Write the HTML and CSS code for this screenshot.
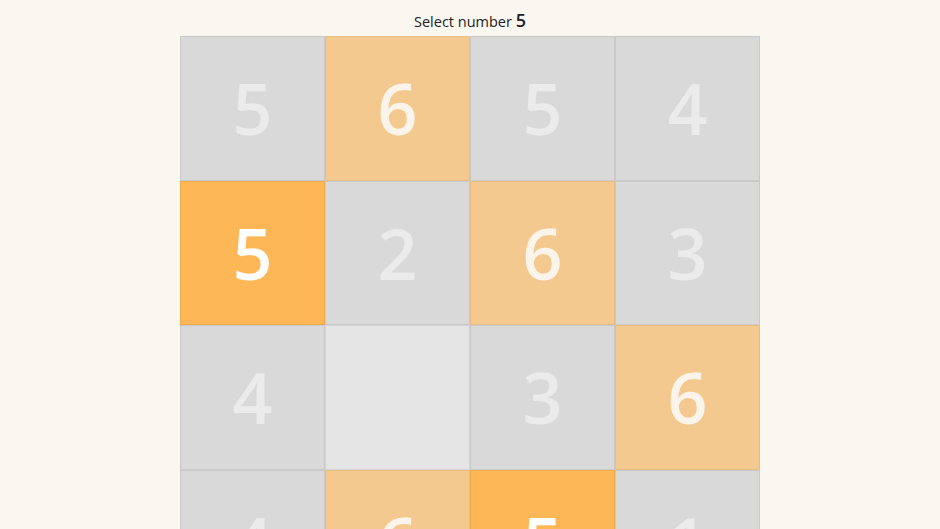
FILE: index.html
```html
<!DOCTYPE html>
<html lang="en">
<head>
    <meta charset="UTF-8">
    <meta name="viewport" content="width=device-width, initial-scale=1.0">
    <title>Select Number</title>
    <link rel="stylesheet" href="styles.css">
</head>
<body>
    <div class="prompt">Select number <span class="target">5</span></div>

    <!-- Board -->
    <div class="board">
        <div class="cell">5</div>
        <div class="cell near">6</div>
        <div class="cell">5</div>
        <div class="cell">4</div>

        <div class="cell hit">5</div>
        <div class="cell">2</div>
        <div class="cell near">6</div>
        <div class="cell">3</div>

        <div class="cell">4</div>
        <div class="cell empty"></div>
        <div class="cell">3</div>
        <div class="cell near">6</div>

        <div class="cell">4</div>
        <div class="cell near">6</div>
        <div class="cell hit">5</div>
        <div class="cell">1</div>
    </div>
</body>
</html>
```

FILE: styles.css
```css
/* Basic Styling */
body {
    margin: 0;
    font-family: "Open Sans", Arial, sans-serif;
    background-color: #faf7f0;
    color: #222;
}

.prompt {
    height: 36px;
    line-height: 40px;
    text-align: center;
    font-size: 14.5px;
}

.target {
    font-size: 18px;
    font-weight: 600;
}

/* Board */
.board {
    display: grid;
    grid-template-columns: repeat(4, 1fr);
    grid-auto-rows: 144.5px;
    width: 580px;
    margin: 0 auto;
}

.cell {
    box-sizing: border-box;
    display: flex;
    align-items: center;
    justify-content: center;
    font-size: 70px;
    font-weight: 600;
    color: #ebebeb;
    background-color: #d9d9d9;
    border: 1px solid #c9c9c9;
}

.cell.near {
    background-color: #f4c98f;
    border-color: #e8bd82;
    color: #fbf4ea;
}

.cell.hit {
    background-color: #feb756;
    border-color: #eeab4c;
    color: #fff;
}

.cell.empty {
    background-color: #e5e5e5;
    border-color: #d3d3d3;
}
```
